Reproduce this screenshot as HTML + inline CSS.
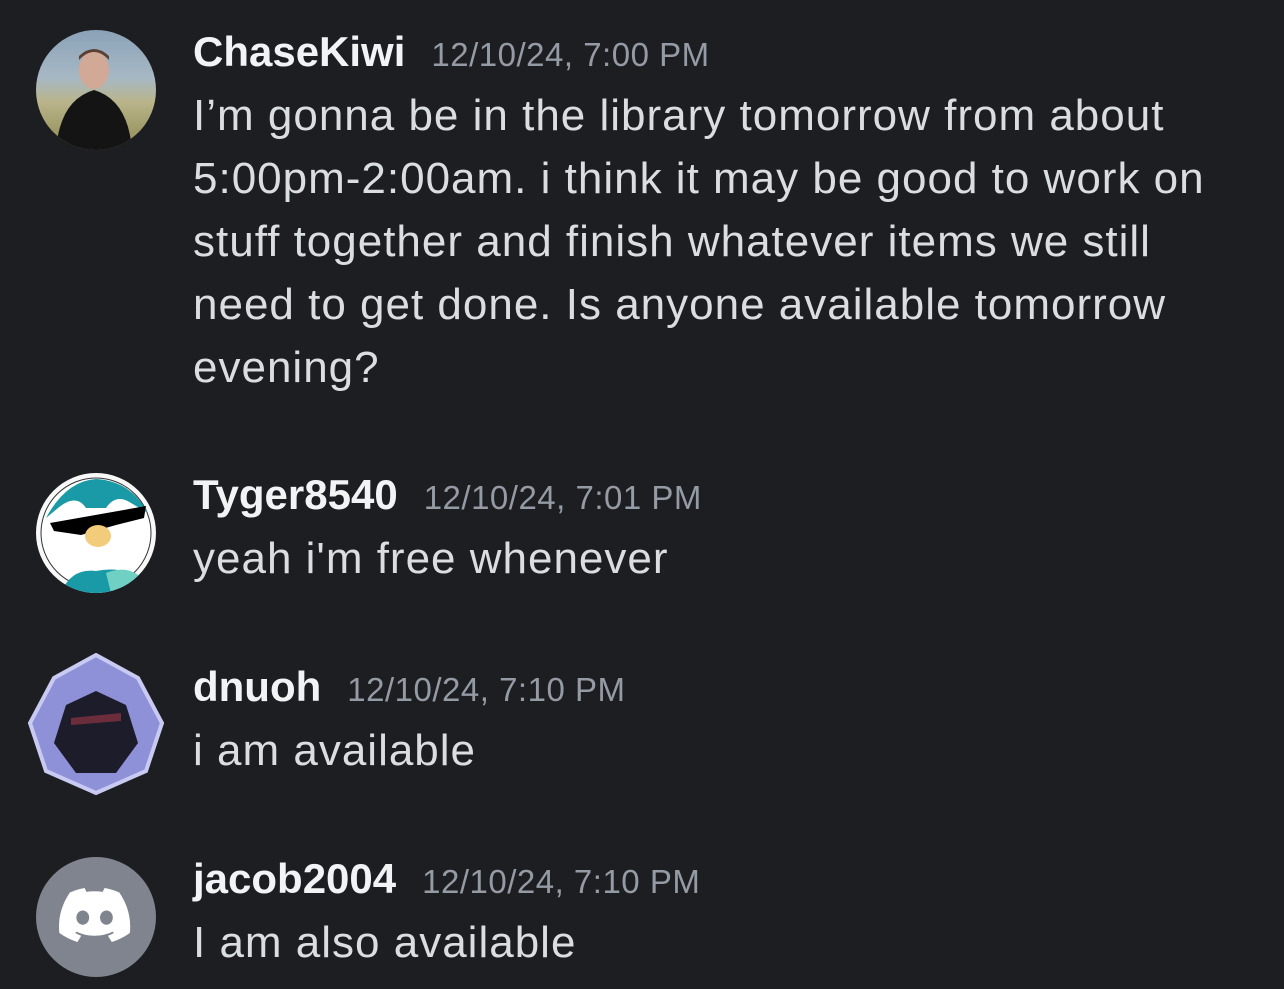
<!DOCTYPE html>
<html><head><meta charset="utf-8"><style>
body{margin:0;width:1284px;height:989px;background:#1d1e22;overflow:hidden;position:relative;font-family:"Liberation Sans",sans-serif}
.n{position:absolute;left:193px;color:#f2f3f5;font-weight:bold;font-size:42px;line-height:40px;white-space:nowrap}
.n span{font-weight:normal;color:#949ba4;font-size:33px;margin-left:26px;letter-spacing:0.5px}
.t{position:absolute;left:193px;color:#dbdee1;font-size:44px;line-height:63px;white-space:nowrap;letter-spacing:1px}
.av{position:absolute;left:36px;width:120px;height:120px;border-radius:50%;overflow:hidden}
</style></head><body>
<div class="av" style="top:30px;background:linear-gradient(180deg,#8aa2b8 0%,#a7b8c4 40%,#b9b48a 60%,#8e8a52 100%)">
<svg width="120" height="120"><ellipse cx="58" cy="40" rx="15" ry="19" fill="#d2a896"/><path d="M43 30 Q58 14 73 30 L73 26 Q58 12 43 26Z" fill="#5a3f33"/><path d="M20 120 Q24 70 58 60 Q92 70 96 120Z" fill="#141414"/></svg></div>
<div class="n" style="top:32px">ChaseKiwi<span>12/10/24, 7:00 PM</span></div>
<div class="t" style="top:84px">I’m gonna be in the library tomorrow from about<br>5:00pm-2:00am. i think it may be good to work on<br>stuff together and finish whatever items we still<br>need to get done. Is anyone available tomorrow<br>evening?</div>

<div class="av" style="top:473px;background:#f8f8f8">
<svg width="120" height="120"><circle cx="60" cy="60" r="55" fill="#fff" stroke="#333" stroke-width="1"/><path d="M10 45 Q30 8 60 6 Q95 8 112 40 L95 30 Q80 20 70 35 L50 35 Q40 20 22 35Z" fill="#1a9aa6"/><path d="M25 120 Q35 95 60 98 Q90 92 110 110 L105 120Z" fill="#1a9aa6"/><path d="M70 100 Q95 90 110 110 L100 120 L75 120Z" fill="#6fd0c3"/><path d="M14 50 L110 33 L108 45 L80 52 L45 62 L18 58Z" fill="#000"/><ellipse cx="62" cy="63" rx="13" ry="11" fill="#f2cc7a"/></svg></div>
<div class="n" style="top:475px">Tyger8540<span>12/10/24, 7:01 PM</span></div>
<div class="t" style="top:527px">yeah i'm free whenever</div>

<svg style="position:absolute;left:26px;top:653px" width="140" height="142"><path d="M70 2 L112 25 L136 70 L120 118 L70 140 L20 118 L4 70 L28 25Z" fill="#8e90d8"/><path d="M70 2 L112 25 L136 70 L120 118 L70 140 L20 118 L4 70 L28 25Z" fill="none" stroke="#c8caf2" stroke-width="4"/><path d="M40 52 L70 38 L100 52 L112 90 L90 120 L50 120 L28 90Z" fill="#1c1c2a"/><path d="M45 65 L95 60 L95 68 L45 72Z" fill="#6b2d3c"/></svg>
<div class="n" style="top:667px">dnuoh<span>12/10/24, 7:10 PM</span></div>
<div class="t" style="top:719px">i am available</div>

<div class="av" style="top:857px;background:#80848e">
<svg width="120" height="120" viewBox="0 0 120 120"><g transform="translate(23,31) scale(0.56)"><path fill="#fff" d="M107.7 8.07A105.15 105.15 0 0 0 81.47 0a72.06 72.06 0 0 0-3.360 6.830 97.68 97.68 0 0 0-29.11 0A72.37 72.37 0 0 0 45.64 0a105.89 105.89 0 0 0-26.25 8.09C2.79 32.65-1.71 56.6.54 80.21a105.73 105.73 0 0 0 32.17 16.15 77.7 77.7 0 0 0 6.89-11.11 68.42 68.42 0 0 1-10.85-5.18c.91-.66 1.8-1.34 2.66-2a75.57 75.57 0 0 0 64.32 0c.87.71 1.76 1.39 2.66 2a68.68 68.68 0 0 1-10.87 5.19 77 77 0 0 0 6.890 11.1 105.25 105.25 0 0 0 32.19-16.14c2.64-27.38-4.51-51.11-18.9-72.15ZM42.45 65.69C36.18 65.69 31 60 31 53s5-12.74 11.43-12.74S54 46 53.89 53s-5.05 12.69-11.44 12.690Zm42.24 0C78.41 65.69 73.25 60 73.25 53s5-12.74 11.44-12.74S96.23 46 96.12 53s-5.04 12.69-11.43 12.69Z"/></g></svg></div>
<div class="n" style="top:859px">jacob2004<span>12/10/24, 7:10 PM</span></div>
<div class="t" style="top:911px">I am also available</div>
</body></html>
